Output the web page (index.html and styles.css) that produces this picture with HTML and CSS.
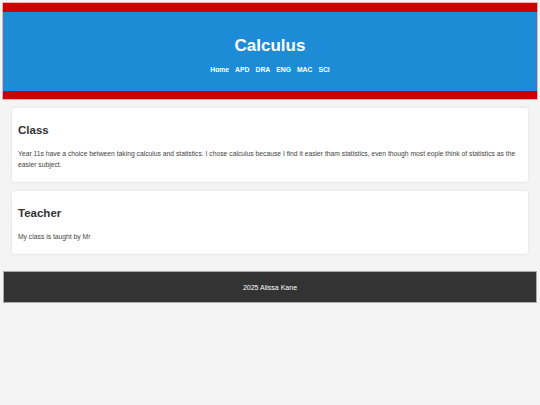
FILE: index.html
```html
<!DOCTYPE html>
<html lang="en">
<head>
<meta charset="utf-8">
<title>Calculus</title>
<link rel="stylesheet" href="styles.css">
</head>
<body>
<header class="site-header">
  <h1 class="site-title">Calculus</h1>
  <nav class="site-nav">
    <a href="#">Home</a>
    <a href="#">APD</a>
    <a href="#">DRA</a>
    <a href="#">ENG</a>
    <a href="#">MAC</a>
    <a href="#">SCI</a>
  </nav>
</header>
<main class="content">
  <section class="card">
    <h2 class="card-title">Class</h2>
    <p class="card-text">Year 11s have a choice between taking calculus and statistics. I chose calculus because I find it easier tham statistics, even though most eople think of statistics as the easier subject.</p>
  </section>
  <section class="card">
    <h2 class="card-title">Teacher</h2>
    <p class="card-text">My class is taught by Mr</p>
  </section>
</main>
<footer class="site-footer">
  <p>2025 Alissa Kane</p>
</footer>
</body>
</html>
```

FILE: styles.css
```css
html, body {
  margin: 0;
  padding: 0;
}
body {
  background: #f4f4f4;
  font-family: "Liberation Sans", Arial, sans-serif;
  color: #333;
  padding: 3px;
}
.site-header {
  background: #1e8bd6;
  border-top: 9px solid #cc0000;
  border-bottom: 8px solid #cc0000;
  box-shadow: 0 0 0 1px #f0b0b0;
  text-align: center;
  color: #fff;
  padding: 24px 0 16px;
}
.site-title {
  margin: 0;
  font-size: 17px;
  line-height: 20px;
  font-weight: bold;
}
.site-nav {
  margin-top: 9px;
  display: flex;
  justify-content: center;
  gap: 6px;
}
.site-nav a {
  color: #fff;
  text-decoration: none;
  font-weight: bold;
  font-size: 6.8px;
  line-height: 10px;
}
.content {
  padding: 9px 9px 17px;
  display: flex;
  flex-direction: column;
  gap: 9px;
}
.card {
  background: #fff;
  border-radius: 3px;
  box-shadow: 0 0 3px rgba(0,0,0,0.1);
  padding: 15px 6px 12px;
}
.card-title {
  margin: 0 0 11px;
  font-size: 11.5px;
  line-height: 14px;
  font-weight: bold;
  color: #333;
}
.card-text {
  margin: 0;
  font-size: 6.75px;
  line-height: 11px;
  color: #444;
}
.card-short .card-title {
  margin-bottom: 10px;
}
.site-footer {
  background: #333;
  border: 1px solid #aaa;
  color: #fff;
  text-align: center;
  height: 30px;
  display: flex;
  align-items: center;
  justify-content: center;
}
.site-footer p {
  margin: 0;
  font-size: 7px;
}
```
